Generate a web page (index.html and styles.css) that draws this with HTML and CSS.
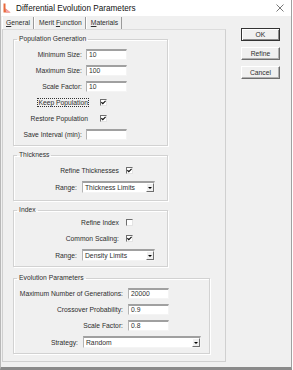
FILE: index.html
```html
<!DOCTYPE html>
<html lang="en">
<head>
    <meta charset="UTF-8">
    <title>Differential Evolution Parameters</title>
    <link rel="stylesheet" href="styles.css">
</head>
<body>

<div class="window">
    <div class="titlebar">
        <svg class="app-icon" width="8" height="10" viewBox="0 0 8 10">
            <path d="M0.5 0.5 H2.5 V5.5 L7.5 9.5 H0.5 Z" fill="#e86a3c"/>
            <path d="M2.5 5.5 L7.5 9.5 H3 Z" fill="#f2a2a8"/>
        </svg>
        <span class="title">Differential Evolution Parameters</span>
        <svg class="close" width="8" height="8" viewBox="0 0 8 8">
            <path d="M0.5 0.5 L7.5 7.5 M7.5 0.5 L0.5 7.5" stroke="#555" stroke-width="0.8"/>
        </svg>
    </div>

    <div class="client">
        <div class="sheet">
            <div class="tabs">
                <span class="tab active"><u>G</u>eneral</span>
                <span class="tab">Merit <u>F</u>unction</span>
                <span class="tab"><u>M</u>aterials</span>
            </div>

            <div class="panel">
                <!-- Population -->
                <fieldset class="group population">
                    <legend>Population Generation</legend>
                    <div class="row"><label class="lbl">Minimum Size:</label><span class="edit">10</span></div>
                    <div class="row"><label class="lbl">Maximum Size:</label><span class="edit">100</span></div>
                    <div class="row"><label class="lbl">Scale Factor:</label><span class="edit">10</span></div>
                    <div class="row check-row"><label class="lbl"><span class="focus">Keep Population</span></label><span class="check on"></span></div>
                    <div class="row check-row"><label class="lbl">Restore Population</label><span class="check on"></span></div>
                    <div class="row"><label class="lbl">Save Interval (min):</label><span class="edit"></span></div>
                </fieldset>

                <!-- Thickness -->
                <fieldset class="group thickness">
                    <legend>Thickness</legend>
                    <div class="row check-row"><label class="lbl">Refine Thicknesses</label><span class="check on"></span></div>
                    <div class="row combo-row">
                        <label class="lbl">Range:</label>
                        <span class="combo"><span class="combo-text">Thickness Limits</span><span class="drop"></span></span>
                    </div>
                </fieldset>

                <!-- Index -->
                <fieldset class="group index">
                    <legend>Index</legend>
                    <div class="row check-row"><label class="lbl">Refine Index</label><span class="check"></span></div>
                    <div class="row check-row"><label class="lbl">Common Scaling:</label><span class="check on"></span></div>
                    <div class="row combo-row">
                        <label class="lbl">Range:</label>
                        <span class="combo"><span class="combo-text">Density Limits</span><span class="drop"></span></span>
                    </div>
                </fieldset>

                <!-- Evolution -->
                <fieldset class="group evolution">
                    <legend>Evolution Parameters</legend>
                    <div class="row"><label class="lbl">Maximum Number of Generations:</label><span class="edit">20000</span></div>
                    <div class="row"><label class="lbl">Crossover Probability:</label><span class="edit">0.9</span></div>
                    <div class="row"><label class="lbl">Scale Factor:</label><span class="edit">0.8</span></div>
                    <div class="row combo-row">
                        <label class="lbl">Strategy:</label>
                        <span class="combo"><span class="combo-text">Random</span><span class="drop"></span></span>
                    </div>
                </fieldset>
            </div>
        </div>

        <div class="buttons">
            <button class="btn default">OK</button>
            <button class="btn">Refine</button>
            <button class="btn">Cancel</button>
        </div>
    </div>
</div>

</body>
</html>
```

FILE: styles.css
```css
* {
    box-sizing: border-box;
}

body {
    margin: 0;
    background-color: #fff;
    font-family: "Liberation Sans", Arial, sans-serif;
    font-size: 6.75px;
    color: #2e2e2e;
}

.window {
    width: 292px;
    height: 370px;
    display: flex;
    flex-direction: column;
    border-left: 1px solid #b8b8b8;
    border-right: 1px solid #a0a0a0;
    border-bottom: 3px solid #8a8a8a;
}

/* title bar */
.titlebar {
    height: 16px;
    display: flex;
    align-items: center;
    background-color: #fff;
}

.app-icon {
    margin-left: 2px;
}

.title {
    margin-left: 5px;
    font-size: 8.2px;
    color: #111;
}

.close {
    margin-left: auto;
    margin-right: 7px;
}

.client {
    flex: 1;
    display: flex;
    background-color: #f0f0f0;
}

.sheet {
    width: 224px;
    margin-left: 1px;
    display: flex;
    flex-direction: column;
}

/* tabs */
.tabs {
    height: 12px;
    margin-top: 1px;
    display: flex;
}

.tab {
    display: block;
    line-height: 12px;
    white-space: nowrap;
    padding: 0 3px 0 4px;
    border-right: 1px solid #9a9a9a;
    border-left: 1px solid #fff;
}

.tab.active {
    padding-left: 3px;
}

.panel {
    height: 333px;
    border: 1px solid #d0d0d0;
    border-top-color: #dcdcdc;
    padding: 6px 0 0 10px;
}

/* group boxes */
.group {
    margin: 0;
    padding: 4px 0 3px;
    border: 1px solid #d2d2d2;
    box-shadow: 1px 1px 0 #fff, inset 1px 1px 0 #fff;
    min-inline-size: 0;
}

.group legend {
    margin-left: 3px;
    padding: 0 2px;
    line-height: 6px;
}

.population,
.thickness,
.index {
    width: 155px;
}

.thickness,
.index {
    margin-top: 6px;
}

.thickness {
    padding-bottom: 4px;
}

.index {
    padding: 1px 0 2px;
}

.evolution {
    width: 197px;
    margin-top: 8px;
    padding-bottom: 2px;
}

.row {
    height: 16px;
    display: flex;
    align-items: center;
}

.combo-row {
    height: 18px;
}

.lbl {
    flex-shrink: 0;
    text-align: right;
    white-space: nowrap;
}

.focus {
    outline: 1px dotted #333;
}

/* column widths per group */
.population .lbl { width: 68px; margin-right: 4px; }
.population .check-row .lbl { width: 74px; margin-right: 12px; }
.thickness .check-row .lbl,
.index .check-row .lbl { width: 105px; margin-right: 7px; }
.thickness .combo-row .lbl,
.index .combo-row .lbl { width: 63px; margin-right: 5px; }
.evolution .lbl { width: 109px; margin-right: 5px; }
.evolution .combo-row .lbl { width: 64px; margin-right: 5px; }

/* controls */
.edit {
    width: 41px;
    height: 11px;
    padding-left: 2px;
    display: flex;
    align-items: center;
    background-color: #fff;
    border-top: 2px solid #a0a0a0;
    border-left: 1px solid #b4b4b4;
    border-right: 1px solid #f4f4f4;
    border-bottom: 1px solid #f4f4f4;
}

.check {
    width: 7px;
    height: 7px;
    background-color: #fff;
    border: 1px solid;
    border-color: #6e6e6e #e4e4e4 #e4e4e4 #6e6e6e;
}

.check.on {
    background: #fff url("data:image/svg+xml,%3Csvg xmlns='http://www.w3.org/2000/svg' width='5' height='5' viewBox='0 0 5 5'%3E%3Cpath d='M0.4 2.2 L1.8 3.6 L4.6 0.8' fill='none' stroke='%23111' stroke-width='1.2'/%3E%3C/svg%3E") no-repeat center;
}

.combo {
    height: 12px;
    display: flex;
    align-items: center;
    background-color: #fff;
    border-top: 2px solid #a0a0a0;
    border-left: 1px solid #b4b4b4;
    border-right: 1px solid #f4f4f4;
    border-bottom: 1px solid #f4f4f4;
}

.thickness .combo,
.index .combo { width: 73px; }
.evolution .combo { width: 118px; }

.combo-text {
    flex: 1;
    padding-left: 2px;
}

.drop {
    width: 8px;
    height: 9px;
    background-color: #f0f0f0;
    border: 1px solid;
    border-color: #fff #6e6e6e #6e6e6e #fff;
    display: flex;
    align-items: center;
    justify-content: center;
}

.drop::after {
    content: "";
    border-left: 2px solid transparent;
    border-right: 2px solid transparent;
    border-top: 2px solid #000;
}

/* dialog buttons */
.buttons {
    margin: 12px 0 0 15px;
    display: flex;
    flex-direction: column;
    gap: 6px;
}

.btn {
    width: 39px;
    height: 13px;
    padding: 0;
    font-family: inherit;
    font-size: 6.75px;
    color: #2e2e2e;
    background-color: #f0f0f0;
    border: 1px solid;
    border-color: #fff #6e6e6e #6e6e6e #fff;
    box-shadow: inset -1px -1px 0 #b0b0b0;
}

.btn.default {
    border-color: #333;
    box-shadow: inset 1px 1px 0 #fff, inset -1px -1px 0 #8a8a8a;
}
```
